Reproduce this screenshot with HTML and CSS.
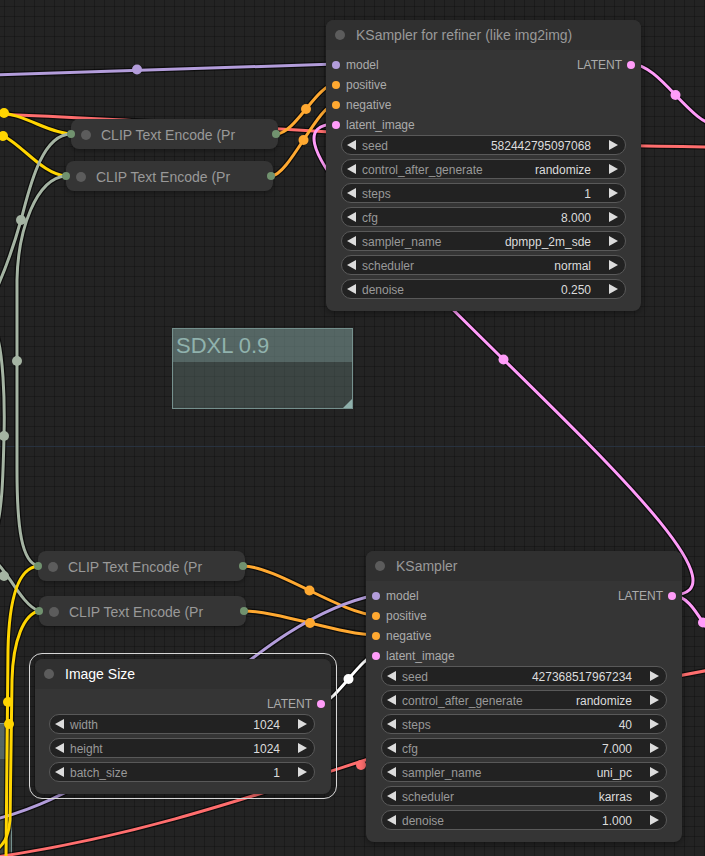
FILE: index.html
```html
<!DOCTYPE html>
<html>
<head>
<meta charset="utf-8">
<link rel="stylesheet" href="styles.css">
</head>
<body>
<div class="canvas">
  <div class="hline"></div>

  <div class="note note-edge"><div class="note-title"></div><div class="note-body"></div></div>

  <svg class="wires" width="705" height="856" viewBox="0 0 705 856">
    <defs>
      <path id="w-model1" d="M-4,75 L336,64"/>
      <path id="w-vae1" d="M-4,114 C220,122 450,145 710,147"/>
      <path id="w-clip1" d="M-4,112 C25,114 48,133 71,134"/>
      <path id="w-clip2" d="M-4,133 C20,140 40,174 66,176"/>
      <path id="w-pos1" d="M276,134 C295.5,134 316.5,84 336,84"/>
      <path id="w-neg1" d="M271,176 C289,176 318,104 336,104"/>
      <path id="w-lat-loop" d="M671,595 C816,595 191,124 336,124"/>
      <path id="w-lat-top" d="M631,64 C661,64 690,126 720,126"/>
      <path id="w-lat-bot" d="M671,595 C700,595 706,650 735,650"/>
      <path id="w-pos2" d="M243,566 C276,566 343,615 376,615"/>
      <path id="w-neg2" d="M244,611 C277,611 343,635 376,635"/>
      <path id="w-model2" d="M-4,819 C150,780 250,620 376,595"/>
      <path id="w-white" d="M321,703 C335,703 362,655 376,655"/>
      <path id="w-vae2" d="M-4,857 C250,820 420,720 710,670"/>
      <path id="w-g1" d="M71,134 C40,134 28,195 21,220 C14,245 6,268 -4,290"/>
      <path id="w-g2" d="M66,176 C36,178 18,230 17,280 L17,470 C17,530 22,562 38,566"/>
      <path id="w-g3" d="M-4,333 C3,350 5,400 4,436 C3,480 2,510 -4,530"/>
      <path id="w-g4" d="M-4,562 C8,572 22,605 39,611"/>
      <path id="w-clip3" d="M38,566 C18,568 9,600 8,650 L6,860"/>
      <path id="w-clip4" d="M39,611 C24,614 13,640 12,680 L10,820 C9,835 4,845 -4,850"/>
    </defs>

    <g class="bg">
      <use href="#w-model1"/><use href="#w-vae1"/><use href="#w-clip1"/><use href="#w-clip2"/>
      <use href="#w-pos1"/><use href="#w-neg1"/><use href="#w-lat-loop"/><use href="#w-lat-top"/>
      <use href="#w-lat-bot"/><use href="#w-pos2"/><use href="#w-neg2"/><use href="#w-model2"/>
      <use href="#w-white"/><use href="#w-vae2"/><use href="#w-g1"/><use href="#w-g2"/>
      <use href="#w-g3"/><use href="#w-g4"/><use href="#w-clip3"/><use href="#w-clip4"/>
    </g>

    <g class="fg">
      <use class="c-model" href="#w-model1"/>
      <use class="c-vae" href="#w-vae1"/>
      <use class="c-clip" href="#w-clip1"/>
      <use class="c-clip" href="#w-clip2"/>
      <use class="c-cond" href="#w-pos1"/>
      <use class="c-cond" href="#w-neg1"/>
      <use class="c-latent" href="#w-lat-loop"/>
      <use class="c-latent" href="#w-lat-top"/>
      <use class="c-latent" href="#w-lat-bot"/>
      <use class="c-cond" href="#w-pos2"/>
      <use class="c-cond" href="#w-neg2"/>
      <use class="c-model" href="#w-model2"/>
      <use class="c-white" href="#w-white"/>
      <use class="c-vae" href="#w-vae2"/>
      <use class="c-str" href="#w-g1"/>
      <use class="c-str" href="#w-g2"/>
      <use class="c-str" href="#w-g3"/>
      <use class="c-str" href="#w-g4"/>
      <use class="c-clip" href="#w-clip3"/>
      <use class="c-clip" href="#w-clip4"/>
    </g>

    <g class="mids">
      <circle class="f-model" cx="137" cy="69.5" r="5"/>
      <circle class="f-clip" cx="4" cy="113" r="5"/>
      <circle class="f-clip" cx="3" cy="136" r="5"/>
      <circle class="f-cond" cx="306" cy="109" r="5"/>
      <circle class="f-cond" cx="303.5" cy="140" r="5"/>
      <circle class="f-latent" cx="503.5" cy="359.5" r="5"/>
      <circle class="f-latent" cx="675.5" cy="95" r="5"/>
      <circle class="f-latent" cx="703" cy="622.5" r="5"/>
      <circle class="f-cond" cx="309.5" cy="590.5" r="5"/>
      <circle class="f-cond" cx="310" cy="623" r="5"/>
      <circle class="f-white" cx="348.5" cy="679" r="5"/>
      <circle class="f-vae" cx="361" cy="765" r="5"/>
      <circle class="f-str" cx="21" cy="220" r="5"/>
      <circle class="f-str" cx="17" cy="361" r="5"/>
      <circle class="f-str" cx="4" cy="436" r="5"/>
      <circle class="f-str" cx="4" cy="576" r="5"/>
      <circle class="f-clip" cx="8" cy="702" r="5"/>
      <circle class="f-clip" cx="9" cy="724" r="5"/>
    </g>
  </svg>

  <div class="note note-sdxl">
    <div class="note-title">SDXL 0.9</div>
    <div class="note-body"></div>
    <span class="resize"></span>
  </div>

  <!-- collapsed CLIP Text Encode nodes -->
  <div class="cnode c1"><i class="pin pin-in"></i><span class="tdot"></span><span class="ctext">CLIP Text Encode (Pr</span><i class="pin pin-out"></i></div>
  <div class="cnode c2"><i class="pin pin-in"></i><span class="tdot"></span><span class="ctext">CLIP Text Encode (Pr</span><i class="pin pin-out"></i></div>
  <div class="cnode c3"><i class="pin pin-in"></i><span class="tdot"></span><span class="ctext">CLIP Text Encode (Pr</span><i class="pin pin-out"></i></div>
  <div class="cnode c4"><i class="pin pin-in"></i><span class="tdot"></span><span class="ctext">CLIP Text Encode (Pr</span><i class="pin pin-out"></i></div>

  <!-- KSampler for refiner -->
  <div class="node n-ks1">
    <div class="node-title"><span class="tdot"></span><span>KSampler for refiner (like img2img)</span></div>
    <div class="node-body">
      <div class="slots">
        <div class="ins">
          <div class="slot"><i class="dot f-bg-model"></i>model</div>
          <div class="slot"><i class="dot f-bg-cond"></i>positive</div>
          <div class="slot"><i class="dot f-bg-cond"></i>negative</div>
          <div class="slot"><i class="dot f-bg-latent"></i>latent_image</div>
        </div>
        <div class="outs">
          <div class="slot out">LATENT<i class="dot f-bg-latent"></i></div>
        </div>
      </div>
      <div class="widgets">
        <div class="widget"><i class="arr-l"></i><span class="wl">seed</span><span class="wv">582442795097068</span><i class="arr-r"></i></div>
        <div class="widget"><i class="arr-l"></i><span class="wl">control_after_generate</span><span class="wv">randomize</span><i class="arr-r"></i></div>
        <div class="widget"><i class="arr-l"></i><span class="wl">steps</span><span class="wv">1</span><i class="arr-r"></i></div>
        <div class="widget"><i class="arr-l"></i><span class="wl">cfg</span><span class="wv">8.000</span><i class="arr-r"></i></div>
        <div class="widget"><i class="arr-l"></i><span class="wl">sampler_name</span><span class="wv">dpmpp_2m_sde</span><i class="arr-r"></i></div>
        <div class="widget"><i class="arr-l"></i><span class="wl">scheduler</span><span class="wv">normal</span><i class="arr-r"></i></div>
        <div class="widget"><i class="arr-l"></i><span class="wl">denoise</span><span class="wv">0.250</span><i class="arr-r"></i></div>
      </div>
    </div>
  </div>

  <!-- KSampler -->
  <div class="node n-ks2">
    <div class="node-title"><span class="tdot"></span><span>KSampler</span></div>
    <div class="node-body">
      <div class="slots">
        <div class="ins">
          <div class="slot"><i class="dot f-bg-model"></i>model</div>
          <div class="slot"><i class="dot f-bg-cond"></i>positive</div>
          <div class="slot"><i class="dot f-bg-cond"></i>negative</div>
          <div class="slot"><i class="dot f-bg-latent"></i>latent_image</div>
        </div>
        <div class="outs">
          <div class="slot out">LATENT<i class="dot f-bg-latent"></i></div>
        </div>
      </div>
      <div class="widgets">
        <div class="widget"><i class="arr-l"></i><span class="wl">seed</span><span class="wv">427368517967234</span><i class="arr-r"></i></div>
        <div class="widget"><i class="arr-l"></i><span class="wl">control_after_generate</span><span class="wv">randomize</span><i class="arr-r"></i></div>
        <div class="widget"><i class="arr-l"></i><span class="wl">steps</span><span class="wv">40</span><i class="arr-r"></i></div>
        <div class="widget"><i class="arr-l"></i><span class="wl">cfg</span><span class="wv">7.000</span><i class="arr-r"></i></div>
        <div class="widget"><i class="arr-l"></i><span class="wl">sampler_name</span><span class="wv">uni_pc</span><i class="arr-r"></i></div>
        <div class="widget"><i class="arr-l"></i><span class="wl">scheduler</span><span class="wv">karras</span><i class="arr-r"></i></div>
        <div class="widget"><i class="arr-l"></i><span class="wl">denoise</span><span class="wv">1.000</span><i class="arr-r"></i></div>
      </div>
    </div>
  </div>

  <!-- Image Size (selected) -->
  <div class="node n-img selected">
    <div class="node-title"><span class="tdot"></span><span class="title-sel">Image Size</span></div>
    <div class="node-body">
      <div class="slots">
        <div class="ins"></div>
        <div class="outs">
          <div class="slot out">LATENT<i class="dot f-bg-latent"></i></div>
        </div>
      </div>
      <div class="widgets narrow">
        <div class="widget"><i class="arr-l"></i><span class="wl">width</span><span class="wv">1024</span><i class="arr-r"></i></div>
        <div class="widget"><i class="arr-l"></i><span class="wl">height</span><span class="wv">1024</span><i class="arr-r"></i></div>
        <div class="widget"><i class="arr-l"></i><span class="wl">batch_size</span><span class="wv">1</span><i class="arr-r"></i></div>
      </div>
    </div>
  </div>
</div>
</body>
</html>
```

FILE: styles.css
```css
body {
  margin: 0;
  background: #222;
  font-family: "Liberation Sans", Arial, sans-serif;
}

.canvas {
  position: relative;
  width: 705px;
  height: 856px;
  overflow: hidden;
  background-color: #232323;
  background-image:
    linear-gradient(rgba(0, 0, 0, 0.22) 1px, transparent 1px),
    linear-gradient(90deg, rgba(0, 0, 0, 0.22) 1px, transparent 1px);
  background-size: 10px 10px;
  background-position: 4px 6px;
}

.hline {
  position: absolute;
  left: 0;
  right: 0;
  top: 446px;
  height: 1px;
  background: #28323f;
}

.wires {
  position: absolute;
  left: 0;
  top: 0;
}

.wires .bg use {
  fill: none;
  stroke: rgba(0, 0, 0, 0.6);
  stroke-width: 5.5;
}

.wires .fg use {
  fill: none;
  stroke-width: 3;
}

.c-model { stroke: #b39ddb; }
.c-cond { stroke: #ffa931; }
.c-latent { stroke: #ff9cf9; }
.c-vae { stroke: #ff6e6e; }
.c-clip { stroke: #ffd500; }
.c-str { stroke: #a5b4a3; }
.c-white { stroke: #ffffff; }

.f-model { fill: #b39ddb; }
.f-cond { fill: #ffa931; }
.f-latent { fill: #ff9cf9; }
.f-vae { fill: #ff6e6e; }
.f-clip { fill: #ffd500; }
.f-str { fill: #a5b4a3; }
.f-white { fill: #ffffff; }

.f-bg-model { background: #b39ddb; }
.f-bg-cond { background: #ffa931; }
.f-bg-latent { background: #ff9cf9; }

/* notes */
.note {
  position: absolute;
  box-sizing: border-box;
  border: 1px solid #75908d;
  display: flex;
  flex-direction: column;
}

.note-title {
  height: 33px;
  background: rgba(135, 170, 165, 0.5);
  color: #90b2ad;
  font-size: 22px;
  line-height: 33px;
  padding-left: 3px;
}

.note-body {
  flex: 1;
  background: rgba(110, 135, 130, 0.35);
}

.note-sdxl {
  left: 172px;
  top: 328px;
  width: 181px;
  height: 81px;
}

.note-edge {
  left: -170px;
  top: 723px;
  width: 182px;
  height: 150px;
}

.note-edge .note-title {
  height: 35px;
}

.resize {
  position: absolute;
  right: 0;
  bottom: 0;
  width: 0;
  height: 0;
  border-left: 9px solid transparent;
  border-bottom: 9px solid #8fb0ab;
}

/* collapsed nodes */
.cnode {
  position: absolute;
  width: 207px;
  height: 30px;
  background: #353535;
  border-radius: 8px;
  display: flex;
  align-items: center;
  gap: 10px;
  padding: 1px 0 0 10px;
  box-sizing: border-box;
  color: #999;
  font-size: 14px;
  box-shadow: 0 2px 5px rgba(0, 0, 0, 0.35);
}

.c1 { left: 71px; top: 119px; }
.c2 { left: 66px; top: 161px; }
.c3 { left: 38px; top: 551px; }
.c4 { left: 39px; top: 596px; }

.pin {
  position: absolute;
  top: 11px;
  width: 8px;
  height: 8px;
  border-radius: 50%;
  background: #71926f;
}

.pin-in { left: -4px; }
.pin-out { right: -2px; }

.tdot {
  width: 10px;
  height: 10px;
  border-radius: 50%;
  background: #5c5c5c;
  flex: none;
}

/* full nodes */
.node {
  position: absolute;
  background: #353535;
  border-radius: 8px;
  box-shadow: 0 2px 6px rgba(0, 0, 0, 0.4);
}

.n-ks1 { left: 326px; top: 20px; width: 315px; }
.n-ks2 { left: 366px; top: 551px; width: 316px; }
.n-img { left: 35px; top: 659px; width: 296px; }

.node-title {
  height: 30px;
  display: flex;
  align-items: center;
  gap: 11px;
  padding-left: 9px;
  background: #303030;
  border-radius: 8px 8px 0 0;
  color: #999;
  font-size: 14px;
}

.title-sel {
  color: #fff;
}

.selected::before {
  content: "";
  position: absolute;
  left: -6px;
  top: -6px;
  right: -6px;
  bottom: -5px;
  border: 1px solid #d8d8d8;
  border-radius: 13px;
  pointer-events: none;
}

.node-body {
  padding: 5px 0 12px;
}

.slots {
  display: flex;
  justify-content: space-between;
}

.slot {
  height: 20px;
  display: flex;
  align-items: center;
  gap: 6px;
  padding-left: 6px;
  font-size: 12px;
  color: #ababab;
}

.slot.out {
  padding-left: 0;
  padding-right: 6px;
  gap: 5px;
}

.dot {
  width: 8px;
  height: 8px;
  border-radius: 50%;
  flex: none;
}

.widgets {
  display: flex;
  flex-direction: column;
  gap: 4px;
  margin: 0 15px 0;
}

.widgets.narrow {
  margin: 0 16px 0 14px;
}

.widget {
  height: 20px;
  box-sizing: border-box;
  border: 1px solid #595959;
  border-radius: 10px;
  background: #222;
  display: flex;
  align-items: center;
  padding: 1px 7px 0 5px;
  font-size: 12px;
}

.arr-l {
  width: 0;
  height: 0;
  margin-top: -1px;
  border-top: 5px solid transparent;
  border-bottom: 5px solid transparent;
  border-right: 9px solid #dcdcdc;
  flex: none;
}

.arr-r {
  width: 0;
  height: 0;
  margin-top: -1px;
  border-top: 5px solid transparent;
  border-bottom: 5px solid transparent;
  border-left: 9px solid #dcdcdc;
  flex: none;
}

.wl {
  flex: 1;
  margin-left: 6px;
  color: #999;
  white-space: nowrap;
}

.wv {
  margin-right: 18px;
  color: #dcdcdc;
  white-space: nowrap;
}
```
